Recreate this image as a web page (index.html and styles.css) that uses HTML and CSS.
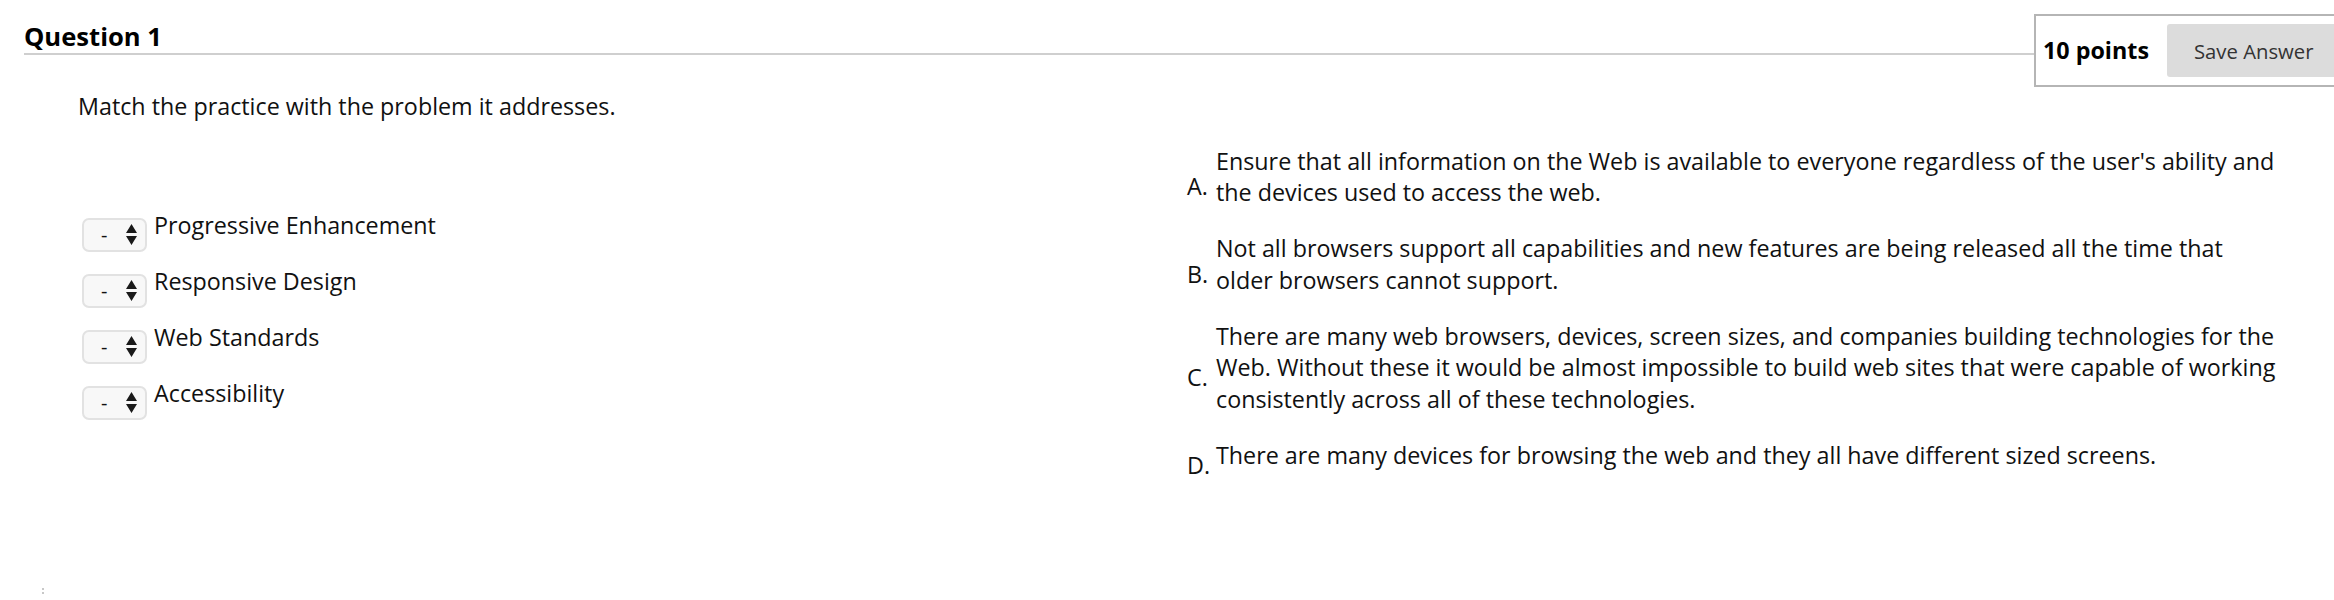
FILE: index.html
```html
<!DOCTYPE html>
<html>
<head>
    <title>Question 1</title>
    <link rel="stylesheet" href="styles.css">
</head>
<body>
    <div class="question-header">
        <h2 class="question-title">Question 1</h2>
        <div class="points-box">
            <span class="points">10 points</span>
            <button type="button" class="save-btn">Save Answer</button>
        </div>
    </div>

    <div class="question-body">
        <p class="prompt">Match the practice with the problem it addresses.</p>

        <div class="match">
            <div class="choices">
                <div class="choice">
                    <div class="select-wrap">
                        <select>
                            <option>-</option>
                            <option>A</option>
                            <option>B</option>
                            <option>C</option>
                            <option>D</option>
                        </select>
                        <svg class="arrows" width="11" height="21" viewBox="0 0 11 21"><path d="M5.5 0L11 9H0z M0 12h11L5.5 21z" fill="#1a1a1a"/></svg>
                    </div>
                    <span class="choice-label">Progressive Enhancement</span>
                </div>
                <div class="choice">
                    <div class="select-wrap">
                        <select>
                            <option>-</option>
                            <option>A</option>
                            <option>B</option>
                            <option>C</option>
                            <option>D</option>
                        </select>
                        <svg class="arrows" width="11" height="21" viewBox="0 0 11 21"><path d="M5.5 0L11 9H0z M0 12h11L5.5 21z" fill="#1a1a1a"/></svg>
                    </div>
                    <span class="choice-label">Responsive Design</span>
                </div>
                <div class="choice">
                    <div class="select-wrap">
                        <select>
                            <option>-</option>
                            <option>A</option>
                            <option>B</option>
                            <option>C</option>
                            <option>D</option>
                        </select>
                        <svg class="arrows" width="11" height="21" viewBox="0 0 11 21"><path d="M5.5 0L11 9H0z M0 12h11L5.5 21z" fill="#1a1a1a"/></svg>
                    </div>
                    <span class="choice-label">Web Standards</span>
                </div>
                <div class="choice">
                    <div class="select-wrap">
                        <select>
                            <option>-</option>
                            <option>A</option>
                            <option>B</option>
                            <option>C</option>
                            <option>D</option>
                        </select>
                        <svg class="arrows" width="11" height="21" viewBox="0 0 11 21"><path d="M5.5 0L11 9H0z M0 12h11L5.5 21z" fill="#1a1a1a"/></svg>
                    </div>
                    <span class="choice-label">Accessibility</span>
                </div>
            </div>

            <div class="answers">
                <div class="answer">
                    <span class="letter">A.</span>
                    <div class="answer-text">Ensure that all information on the Web is available to everyone regardless of the user's ability and the devices used to access the web.</div>
                </div>
                <div class="answer">
                    <span class="letter">B.</span>
                    <div class="answer-text">Not all browsers support all capabilities and new features are being released all the time that older browsers cannot support.</div>
                </div>
                <div class="answer">
                    <span class="letter">C.</span>
                    <div class="answer-text">There are many web browsers, devices, screen sizes, and companies building technologies for the Web. Without these it would be almost impossible to build web sites that were capable of working consistently across all of these technologies.</div>
                </div>
                <div class="answer">
                    <span class="letter">D.</span>
                    <div class="answer-text">There are many devices for browsing the web and they all have different sized screens.</div>
                </div>
            </div>
        </div>
    </div>
    <span class="resize-dots"></span>
</body>
</html>
```

FILE: styles.css
```css
body {
    margin: 0;
    font-family: "Open Sans", "Noto Sans", sans-serif;
    font-size: 23.3px;
    line-height: 31.5px;
    color: #111;
    background-color: #fff;
    overflow-x: hidden;
}

/* header row: title with rule, points box on the right */
.question-header {
    display: flex;
    align-items: flex-start;
    padding: 14px 0 0 24px;
}

.question-title {
    flex: 0 0 2010px;
    margin: 0;
    padding-top: 7px;
    font-size: 25.6px;
    line-height: 32px;
    font-weight: 700;
    color: #000;
    border-bottom: 2px solid #cfcfcf;
}

.points-box {
    flex: none;
    display: flex;
    align-items: center;
    gap: 18px;
    padding: 8px 30px 8px 7px;
    border: 2px solid #b5b5b5;
}

.points {
    font-weight: 700;
    color: #000;
}

.save-btn {
    height: 53px;
    padding: 0 27px;
    border: none;
    border-radius: 3px;
    background-color: #dcdcdc;
    color: #333;
    font-family: inherit;
    font-size: 20.3px;
    cursor: pointer;
}

.question-body {
    padding: 4px 0 0 78px;
}

.prompt {
    margin: 0;
}

.match {
    display: flex;
    align-items: flex-start;
    padding-top: 23px;
}

/* left column: dropdowns */
.choices {
    flex: 0 0 1109px;
    padding-top: 64px;
}

.choice {
    display: flex;
    align-items: flex-start;
    margin-bottom: 14px;
}

.select-wrap {
    position: relative;
    margin: 8px 0 0 4px;
}

.select-wrap select {
    appearance: none;
    -webkit-appearance: none;
    display: block;
    width: 65px;
    height: 34px;
    padding: 0 0 0 17px;
    border: 2px solid #e2e2e2;
    border-radius: 7px;
    background-color: #f8f8f8;
    color: #111;
    font-family: inherit;
    font-size: 20px;
}

.arrows {
    position: absolute;
    top: 6px;
    left: 44px;
    pointer-events: none;
}

.choice-label {
    margin-left: 7px;
}

/* right column: lettered answers */
.answer {
    display: flex;
    margin-bottom: 24.5px;
}

.letter {
    flex: 0 0 29px;
    align-self: center;
    margin: 10px 0 -10px;
}

.answer-text {
    width: 1064px;
}

/* little grip mark in the lower left corner */
.resize-dots {
    display: block;
    width: 2px;
    height: 6px;
    margin: 92px 0 0 42px;
    border-left: 2px dotted #c8c8c8;
}
```
